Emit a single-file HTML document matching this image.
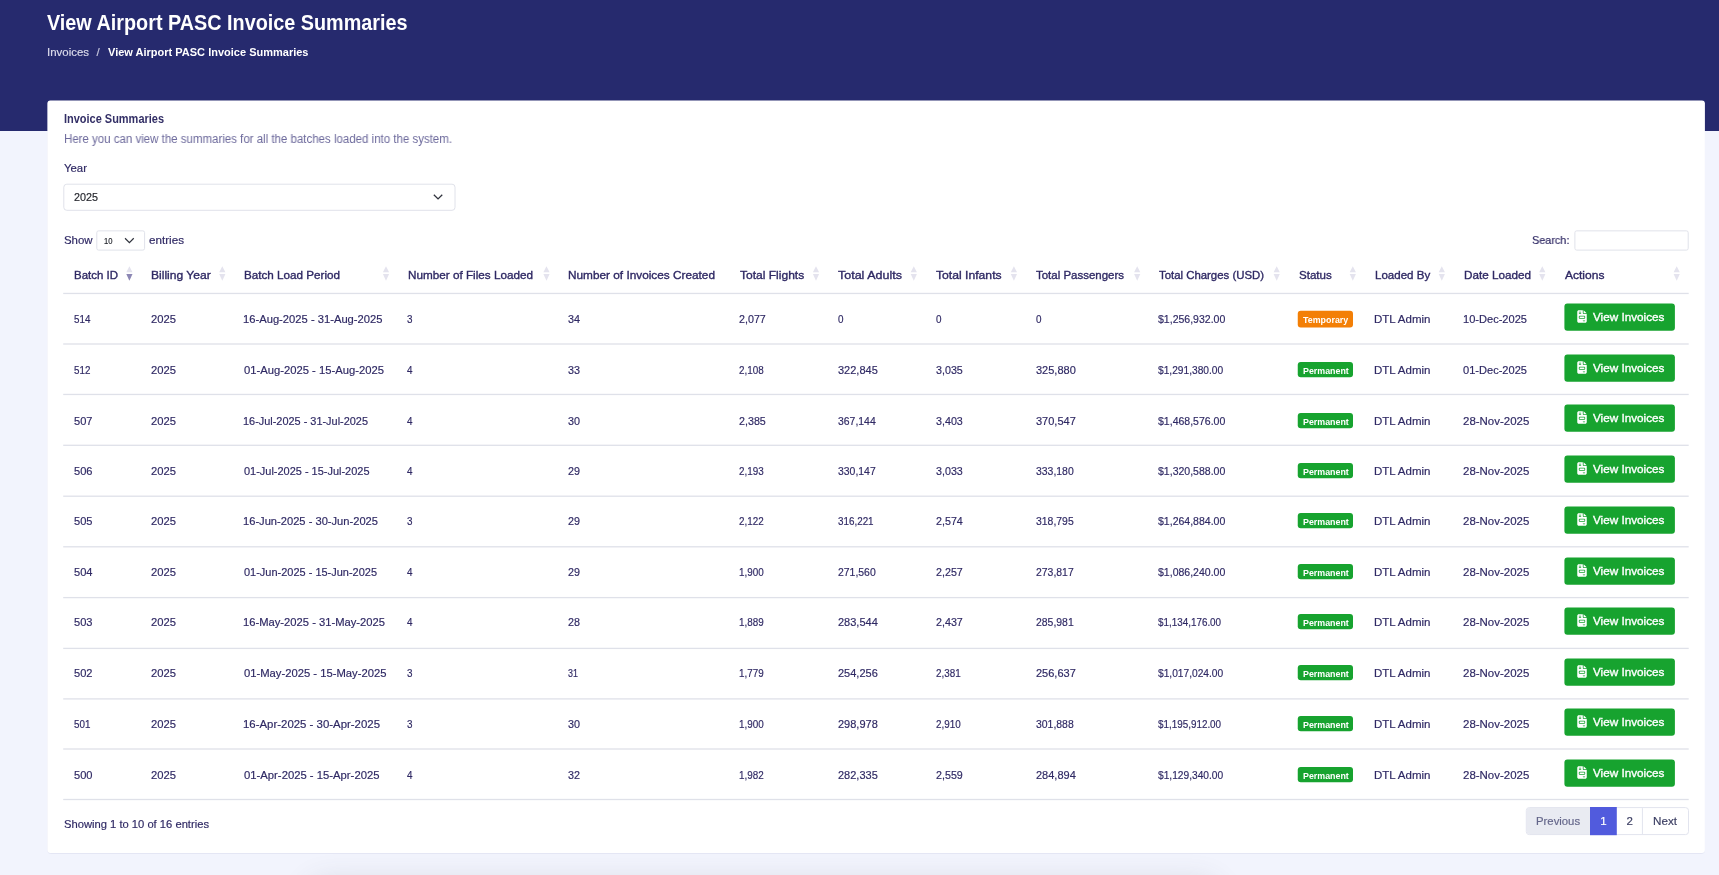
<!DOCTYPE html>
<html lang="en"><head><meta charset="utf-8"><title>View Airport PASC Invoice Summaries</title>
<style>
html,body{margin:0;padding:0}
body{width:1719px;height:875px;overflow:hidden;position:relative;background:#f2f4fd;font-family:"Liberation Sans", sans-serif;}
.t{position:absolute;white-space:nowrap;display:block;transform-origin:0 50%}
#root{position:absolute;left:0;top:0;width:1719px;height:875px;overflow:hidden;will-change:transform}
#hdr{position:absolute;left:0;top:0;width:1719px;height:130.6px;background:#262a6e}
#g{position:absolute;left:0;top:0}
</style></head>
<body>
<div id="root">
<div id="hdr"></div>

<svg id="g" width="1719" height="875" viewBox="0 0 1719 875">
<rect x="47.4" y="101.6" width="1657.5" height="752.2" rx="3.5" fill="#9ea3cc" opacity=".22"/><rect x="47.4" y="100.5" width="1657.5" height="752.4" rx="3" fill="#fff"/>
<rect x="1297.75" y="310.80" width="55.25" height="16.65" fill="#f37f06" rx="3"/>
<rect x="1564.40" y="303.50" width="110.50" height="27.30" fill="#17a32f" rx="3"/>
<path transform="translate(1577.25 310.15) scale(0.02474)" fill="#fff" d="M64 0C28.7 0 0 28.7 0 64V448c0 35.3 28.7 64 64 64H320c35.3 0 64-28.7 64-64V160H256c-17.7 0-32-14.3-32-32V0H64zM256 0V128H384L256 0zM80 64h64c8.800 0 16 7.200 16 16s-7.200 16-16 16H80c-8.800 0-16-7.200-16-16s7.200-16 16-16zm0 64h64c8.800 0 16 7.200 16 16s-7.200 16-16 16H80c-8.800 0-16-7.200-16-16s7.200-16 16-16zm16 96H288c17.700 0 32 14.300 32 32v64c0 17.700-14.300 32-32 32H96c-17.700 0-32-14.300-32-32V256c0-17.700 14.300-32 32-32zm0 32v64H288V256H96zM240 416h64c8.800 0 16 7.200 16 16s-7.200 16-16 16H240c-8.800 0-16-7.200-16-16s7.200-16 16-16z"/>
<rect x="1297.75" y="362.00" width="55.25" height="15.35" fill="#17a32f" rx="3"/>
<rect x="1564.40" y="354.50" width="110.50" height="27.30" fill="#17a32f" rx="3"/>
<path transform="translate(1577.25 361.15) scale(0.02474)" fill="#fff" d="M64 0C28.7 0 0 28.7 0 64V448c0 35.3 28.7 64 64 64H320c35.3 0 64-28.7 64-64V160H256c-17.7 0-32-14.3-32-32V0H64zM256 0V128H384L256 0zM80 64h64c8.800 0 16 7.200 16 16s-7.200 16-16 16H80c-8.800 0-16-7.200-16-16s7.200-16 16-16zm0 64h64c8.800 0 16 7.200 16 16s-7.200 16-16 16H80c-8.800 0-16-7.200-16-16s7.200-16 16-16zm16 96H288c17.700 0 32 14.300 32 32v64c0 17.700-14.300 32-32 32H96c-17.700 0-32-14.300-32-32V256c0-17.700 14.300-32 32-32zm0 32v64H288V256H96zM240 416h64c8.800 0 16 7.200 16 16s-7.200 16-16 16H240c-8.800 0-16-7.200-16-16s7.200-16 16-16z"/>
<rect x="1297.75" y="413.00" width="55.25" height="15.35" fill="#17a32f" rx="3"/>
<rect x="1564.40" y="404.50" width="110.50" height="27.30" fill="#17a32f" rx="3"/>
<path transform="translate(1577.25 411.15) scale(0.02474)" fill="#fff" d="M64 0C28.7 0 0 28.7 0 64V448c0 35.3 28.7 64 64 64H320c35.3 0 64-28.7 64-64V160H256c-17.7 0-32-14.3-32-32V0H64zM256 0V128H384L256 0zM80 64h64c8.800 0 16 7.200 16 16s-7.200 16-16 16H80c-8.800 0-16-7.200-16-16s7.200-16 16-16zm0 64h64c8.800 0 16 7.200 16 16s-7.200 16-16 16H80c-8.800 0-16-7.200-16-16s7.200-16 16-16zm16 96H288c17.700 0 32 14.300 32 32v64c0 17.700-14.300 32-32 32H96c-17.700 0-32-14.300-32-32V256c0-17.700 14.300-32 32-32zm0 32v64H288V256H96zM240 416h64c8.800 0 16 7.200 16 16s-7.200 16-16 16H240c-8.800 0-16-7.200-16-16s7.200-16 16-16z"/>
<rect x="1297.75" y="463.00" width="55.25" height="15.35" fill="#17a32f" rx="3"/>
<rect x="1564.40" y="455.50" width="110.50" height="27.30" fill="#17a32f" rx="3"/>
<path transform="translate(1577.25 462.15) scale(0.02474)" fill="#fff" d="M64 0C28.7 0 0 28.7 0 64V448c0 35.3 28.7 64 64 64H320c35.3 0 64-28.7 64-64V160H256c-17.7 0-32-14.3-32-32V0H64zM256 0V128H384L256 0zM80 64h64c8.800 0 16 7.200 16 16s-7.200 16-16 16H80c-8.800 0-16-7.200-16-16s7.200-16 16-16zm0 64h64c8.800 0 16 7.200 16 16s-7.200 16-16 16H80c-8.800 0-16-7.200-16-16s7.200-16 16-16zm16 96H288c17.700 0 32 14.300 32 32v64c0 17.700-14.300 32-32 32H96c-17.700 0-32-14.300-32-32V256c0-17.700 14.300-32 32-32zm0 32v64H288V256H96zM240 416h64c8.800 0 16 7.200 16 16s-7.200 16-16 16H240c-8.800 0-16-7.200-16-16s7.200-16 16-16z"/>
<rect x="1297.75" y="513.00" width="55.25" height="15.35" fill="#17a32f" rx="3"/>
<rect x="1564.40" y="506.50" width="110.50" height="27.30" fill="#17a32f" rx="3"/>
<path transform="translate(1577.25 513.15) scale(0.02474)" fill="#fff" d="M64 0C28.7 0 0 28.7 0 64V448c0 35.3 28.7 64 64 64H320c35.3 0 64-28.7 64-64V160H256c-17.7 0-32-14.3-32-32V0H64zM256 0V128H384L256 0zM80 64h64c8.800 0 16 7.200 16 16s-7.200 16-16 16H80c-8.800 0-16-7.200-16-16s7.200-16 16-16zm0 64h64c8.800 0 16 7.200 16 16s-7.200 16-16 16H80c-8.800 0-16-7.200-16-16s7.200-16 16-16zm16 96H288c17.700 0 32 14.300 32 32v64c0 17.700-14.300 32-32 32H96c-17.700 0-32-14.300-32-32V256c0-17.700 14.300-32 32-32zm0 32v64H288V256H96zM240 416h64c8.800 0 16 7.200 16 16s-7.200 16-16 16H240c-8.800 0-16-7.200-16-16s7.200-16 16-16z"/>
<rect x="1297.75" y="564.00" width="55.25" height="15.35" fill="#17a32f" rx="3"/>
<rect x="1564.40" y="557.50" width="110.50" height="27.30" fill="#17a32f" rx="3"/>
<path transform="translate(1577.25 564.15) scale(0.02474)" fill="#fff" d="M64 0C28.7 0 0 28.7 0 64V448c0 35.3 28.7 64 64 64H320c35.3 0 64-28.7 64-64V160H256c-17.7 0-32-14.3-32-32V0H64zM256 0V128H384L256 0zM80 64h64c8.800 0 16 7.200 16 16s-7.200 16-16 16H80c-8.800 0-16-7.200-16-16s7.200-16 16-16zm0 64h64c8.800 0 16 7.200 16 16s-7.200 16-16 16H80c-8.800 0-16-7.200-16-16s7.200-16 16-16zm16 96H288c17.700 0 32 14.300 32 32v64c0 17.700-14.300 32-32 32H96c-17.700 0-32-14.300-32-32V256c0-17.700 14.300-32 32-32zm0 32v64H288V256H96zM240 416h64c8.800 0 16 7.200 16 16s-7.200 16-16 16H240c-8.800 0-16-7.200-16-16s7.200-16 16-16z"/>
<rect x="1297.75" y="614.00" width="55.25" height="15.35" fill="#17a32f" rx="3"/>
<rect x="1564.40" y="607.50" width="110.50" height="27.30" fill="#17a32f" rx="3"/>
<path transform="translate(1577.25 614.15) scale(0.02474)" fill="#fff" d="M64 0C28.7 0 0 28.7 0 64V448c0 35.3 28.7 64 64 64H320c35.3 0 64-28.7 64-64V160H256c-17.7 0-32-14.3-32-32V0H64zM256 0V128H384L256 0zM80 64h64c8.800 0 16 7.200 16 16s-7.200 16-16 16H80c-8.800 0-16-7.200-16-16s7.200-16 16-16zm0 64h64c8.800 0 16 7.200 16 16s-7.200 16-16 16H80c-8.800 0-16-7.200-16-16s7.200-16 16-16zm16 96H288c17.700 0 32 14.300 32 32v64c0 17.700-14.300 32-32 32H96c-17.700 0-32-14.300-32-32V256c0-17.700 14.300-32 32-32zm0 32v64H288V256H96zM240 416h64c8.800 0 16 7.200 16 16s-7.200 16-16 16H240c-8.800 0-16-7.200-16-16s7.200-16 16-16z"/>
<rect x="1297.75" y="665.00" width="55.25" height="15.35" fill="#17a32f" rx="3"/>
<rect x="1564.40" y="658.50" width="110.50" height="27.30" fill="#17a32f" rx="3"/>
<path transform="translate(1577.25 665.15) scale(0.02474)" fill="#fff" d="M64 0C28.7 0 0 28.7 0 64V448c0 35.3 28.7 64 64 64H320c35.3 0 64-28.7 64-64V160H256c-17.7 0-32-14.3-32-32V0H64zM256 0V128H384L256 0zM80 64h64c8.800 0 16 7.200 16 16s-7.200 16-16 16H80c-8.800 0-16-7.200-16-16s7.200-16 16-16zm0 64h64c8.800 0 16 7.200 16 16s-7.200 16-16 16H80c-8.800 0-16-7.200-16-16s7.200-16 16-16zm16 96H288c17.700 0 32 14.300 32 32v64c0 17.700-14.300 32-32 32H96c-17.700 0-32-14.300-32-32V256c0-17.700 14.300-32 32-32zm0 32v64H288V256H96zM240 416h64c8.800 0 16 7.200 16 16s-7.200 16-16 16H240c-8.800 0-16-7.200-16-16s7.200-16 16-16z"/>
<rect x="1297.75" y="716.00" width="55.25" height="15.35" fill="#17a32f" rx="3"/>
<rect x="1564.40" y="708.50" width="110.50" height="27.30" fill="#17a32f" rx="3"/>
<path transform="translate(1577.25 715.15) scale(0.02474)" fill="#fff" d="M64 0C28.7 0 0 28.7 0 64V448c0 35.3 28.7 64 64 64H320c35.3 0 64-28.7 64-64V160H256c-17.7 0-32-14.3-32-32V0H64zM256 0V128H384L256 0zM80 64h64c8.800 0 16 7.200 16 16s-7.200 16-16 16H80c-8.800 0-16-7.200-16-16s7.200-16 16-16zm0 64h64c8.800 0 16 7.200 16 16s-7.200 16-16 16H80c-8.800 0-16-7.200-16-16s7.200-16 16-16zm16 96H288c17.700 0 32 14.300 32 32v64c0 17.700-14.300 32-32 32H96c-17.700 0-32-14.300-32-32V256c0-17.700 14.300-32 32-32zm0 32v64H288V256H96zM240 416h64c8.800 0 16 7.200 16 16s-7.200 16-16 16H240c-8.800 0-16-7.200-16-16s7.200-16 16-16z"/>
<rect x="1297.75" y="767.00" width="55.25" height="15.35" fill="#17a32f" rx="3"/>
<rect x="1564.40" y="759.50" width="110.50" height="27.30" fill="#17a32f" rx="3"/>
<path transform="translate(1577.25 766.15) scale(0.02474)" fill="#fff" d="M64 0C28.7 0 0 28.7 0 64V448c0 35.3 28.7 64 64 64H320c35.3 0 64-28.7 64-64V160H256c-17.7 0-32-14.3-32-32V0H64zM256 0V128H384L256 0zM80 64h64c8.800 0 16 7.200 16 16s-7.200 16-16 16H80c-8.800 0-16-7.200-16-16s7.200-16 16-16zm0 64h64c8.800 0 16 7.200 16 16s-7.200 16-16 16H80c-8.800 0-16-7.200-16-16s7.200-16 16-16zm16 96H288c17.700 0 32 14.300 32 32v64c0 17.700-14.300 32-32 32H96c-17.700 0-32-14.300-32-32V256c0-17.700 14.300-32 32-32zm0 32v64H288V256H96zM240 416h64c8.800 0 16 7.200 16 16s-7.200 16-16 16H240c-8.800 0-16-7.200-16-16s7.200-16 16-16z"/>
<rect x="63.20" y="292.80" width="1625.50" height="1.30" fill="#dfe1e9"/>
<rect x="63.20" y="343.35" width="1625.50" height="1.30" fill="#dfe1e9"/>
<rect x="63.20" y="393.80" width="1625.50" height="1.30" fill="#dfe1e9"/>
<rect x="63.20" y="444.65" width="1625.50" height="1.30" fill="#dfe1e9"/>
<rect x="63.20" y="495.55" width="1625.50" height="1.30" fill="#dfe1e9"/>
<rect x="63.20" y="546.15" width="1625.50" height="1.30" fill="#dfe1e9"/>
<rect x="63.20" y="596.95" width="1625.50" height="1.30" fill="#dfe1e9"/>
<rect x="63.20" y="647.75" width="1625.50" height="1.30" fill="#dfe1e9"/>
<rect x="63.20" y="698.25" width="1625.50" height="1.30" fill="#dfe1e9"/>
<rect x="63.20" y="748.35" width="1625.50" height="1.30" fill="#dfe1e9"/>
<rect x="63.20" y="798.85" width="1625.50" height="1.30" fill="#dfe1e9"/>
<rect x="63.80" y="184.20" width="391.20" height="26.10" fill="#fff" rx="3" stroke="#e0e2ea" stroke-width="1"/>
<path d="M434.3 195.2 L438.05 198.95 L441.8 195.2" fill="none" stroke="#30333d" stroke-width="1.3" stroke-linecap="square" stroke-linejoin="miter"/>
<rect x="96.80" y="230.85" width="47.80" height="19.25" fill="#fff" rx="1.8" stroke="#e0e2ea" stroke-width="1"/>
<path d="M125.5 238.7 L129.4 242.6 L133.3 238.7" fill="none" stroke="#30333d" stroke-width="1.25" stroke-linecap="square" stroke-linejoin="miter"/>
<rect x="1574.90" y="230.85" width="113.30" height="19.25" fill="#fff" rx="1.8" stroke="#e0e2ea" stroke-width="1"/>
<path d="M129.40 266.2 l3.1 6 h-6.2 Z" fill="#e4e3ee"/><path d="M129.40 280.8 l3.1 -6.7 h-6.2 Z" fill="#8c87b4"/>
<path d="M222.30 266.2 l3.1 6 h-6.2 Z" fill="#e4e3ee"/><path d="M222.30 280.8 l3.1 -6.7 h-6.2 Z" fill="#e4e3ee"/>
<path d="M386.00 266.2 l3.1 6 h-6.2 Z" fill="#e4e3ee"/><path d="M386.00 280.8 l3.1 -6.7 h-6.2 Z" fill="#e4e3ee"/>
<path d="M546.50 266.2 l3.1 6 h-6.2 Z" fill="#e4e3ee"/><path d="M546.50 280.8 l3.1 -6.7 h-6.2 Z" fill="#e4e3ee"/>
<path d="M816.00 266.2 l3.1 6 h-6.2 Z" fill="#e4e3ee"/><path d="M816.00 280.8 l3.1 -6.7 h-6.2 Z" fill="#e4e3ee"/>
<path d="M913.80 266.2 l3.1 6 h-6.2 Z" fill="#e4e3ee"/><path d="M913.80 280.8 l3.1 -6.7 h-6.2 Z" fill="#e4e3ee"/>
<path d="M1013.90 266.2 l3.1 6 h-6.2 Z" fill="#e4e3ee"/><path d="M1013.90 280.8 l3.1 -6.7 h-6.2 Z" fill="#e4e3ee"/>
<path d="M1137.20 266.2 l3.1 6 h-6.2 Z" fill="#e4e3ee"/><path d="M1137.20 280.8 l3.1 -6.7 h-6.2 Z" fill="#e4e3ee"/>
<path d="M1276.70 266.2 l3.1 6 h-6.2 Z" fill="#e4e3ee"/><path d="M1276.70 280.8 l3.1 -6.7 h-6.2 Z" fill="#e4e3ee"/>
<path d="M1352.80 266.2 l3.1 6 h-6.2 Z" fill="#e4e3ee"/><path d="M1352.80 280.8 l3.1 -6.7 h-6.2 Z" fill="#e4e3ee"/>
<path d="M1441.80 266.2 l3.1 6 h-6.2 Z" fill="#e4e3ee"/><path d="M1441.80 280.8 l3.1 -6.7 h-6.2 Z" fill="#e4e3ee"/>
<path d="M1542.30 266.2 l3.1 6 h-6.2 Z" fill="#e4e3ee"/><path d="M1542.30 280.8 l3.1 -6.7 h-6.2 Z" fill="#e4e3ee"/>
<path d="M1676.70 266.2 l3.1 6 h-6.2 Z" fill="#e4e3ee"/><path d="M1676.70 280.8 l3.1 -6.7 h-6.2 Z" fill="#e4e3ee"/>
<rect x="1526.30" y="807.60" width="162.20" height="27.00" fill="#fff" rx="3" stroke="#e2e4ee" stroke-width="1"/>
<path d="M1529.3 808.1 H1590 V834.1 H1529.3 a2.5 2.5 0 0 1 -2.5 -2.5 V810.6 a2.5 2.5 0 0 1 2.5 -2.5 Z" fill="#e9ebf2"/>
<rect x="1590.00" y="807.00" width="26.80" height="28.20" fill="#515bdd"/>
<rect x="1641.90" y="808.10" width="1.00" height="26.00" fill="#e2e4ee"/>
</svg>
<div style="position:absolute;left:318px;top:892px;width:890px;height:40px;border-radius:8px;background:#e4e5ea;box-shadow:0 0 30px 10px rgba(70,72,90,.16)"></div>

<span class="t" style="left:47.00px;top:10px;font-size:22.3px;line-height:25px;color:#fff;font-weight:700;transform:scaleX(0.8879);">View Airport PASC Invoice Summaries</span>
<span class="t" style="left:46.70px;top:46px;font-size:11.5px;line-height:12px;color:#dcdcec;transform:scaleX(0.9956);-webkit-text-stroke:0.18px #dcdcec;">Invoices</span>
<span class="t" style="left:96.50px;top:46px;font-size:11.5px;line-height:12px;color:#c9c9df;-webkit-text-stroke:0.18px #c9c9df;">/</span>
<span class="t" style="left:108.00px;top:46px;font-size:11.5px;line-height:12px;color:#fff;font-weight:700;transform:scaleX(0.9574);">View Airport PASC Invoice Summaries</span>
<span class="t" style="left:64.00px;top:112px;font-size:12px;line-height:14px;color:#332f66;font-weight:700;transform:scaleX(0.9142);">Invoice Summaries</span>
<span class="t" style="left:64.00px;top:132px;font-size:12px;line-height:14px;color:#6d6a9c;transform:scaleX(0.9567);">Here you can view the summaries for all the batches loaded into the system.</span>
<span class="t" style="left:64.00px;top:162px;font-size:11.5px;line-height:12px;color:#2f2964;transform:scaleX(0.9892);-webkit-text-stroke:0.18px #2f2964;">Year</span>
<span class="t" style="left:74.00px;top:191px;font-size:11.5px;line-height:12px;color:#24262d;transform:scaleX(0.9377);-webkit-text-stroke:0.18px #24262d;">2025</span>
<span class="t" style="left:64.00px;top:234px;font-size:11.5px;line-height:12px;color:#2f2964;transform:scaleX(0.9937);-webkit-text-stroke:0.18px #2f2964;">Show</span>
<span class="t" style="left:103.70px;top:236px;font-size:9px;line-height:10px;color:#24262d;transform:scaleX(0.8487);-webkit-text-stroke:0.18px #24262d;">10</span>
<span class="t" style="left:149.00px;top:234px;font-size:11.5px;line-height:12px;color:#2f2964;transform:scaleX(1.0136);-webkit-text-stroke:0.18px #2f2964;">entries</span>
<span class="t" style="left:1532.00px;top:234px;font-size:11.5px;line-height:12px;color:#2f2964;transform:scaleX(0.9435);-webkit-text-stroke:0.18px #2f2964;">Search:</span>
<span class="t" style="left:74.10px;top:269px;font-size:11.5px;line-height:12px;color:#2f2964;transform:scaleX(0.9975);-webkit-text-stroke:0.35px #2f2964;">Batch ID</span>
<span class="t" style="left:151.20px;top:269px;font-size:11.5px;line-height:12px;color:#2f2964;transform:scaleX(1.0491);-webkit-text-stroke:0.35px #2f2964;">Billing Year</span>
<span class="t" style="left:244.00px;top:269px;font-size:11.5px;line-height:12px;color:#2f2964;transform:scaleX(1.0145);-webkit-text-stroke:0.35px #2f2964;">Batch Load Period</span>
<span class="t" style="left:407.70px;top:269px;font-size:11.5px;line-height:12px;color:#2f2964;transform:scaleX(1.0185);-webkit-text-stroke:0.35px #2f2964;">Number of Files Loaded</span>
<span class="t" style="left:568.30px;top:269px;font-size:11.5px;line-height:12px;color:#2f2964;transform:scaleX(1.0266);-webkit-text-stroke:0.35px #2f2964;">Number of Invoices Created</span>
<span class="t" style="left:739.70px;top:269px;font-size:11.5px;line-height:12px;color:#2f2964;transform:scaleX(1.0463);-webkit-text-stroke:0.35px #2f2964;">Total Flights</span>
<span class="t" style="left:838.10px;top:269px;font-size:11.5px;line-height:12px;color:#2f2964;transform:scaleX(1.0862);-webkit-text-stroke:0.35px #2f2964;">Total Adults</span>
<span class="t" style="left:935.90px;top:269px;font-size:11.5px;line-height:12px;color:#2f2964;transform:scaleX(1.0578);-webkit-text-stroke:0.35px #2f2964;">Total Infants</span>
<span class="t" style="left:1036.00px;top:269px;font-size:11.5px;line-height:12px;color:#2f2964;transform:scaleX(0.9975);-webkit-text-stroke:0.35px #2f2964;">Total Passengers</span>
<span class="t" style="left:1158.80px;top:269px;font-size:11.5px;line-height:12px;color:#2f2964;transform:scaleX(0.9897);-webkit-text-stroke:0.35px #2f2964;">Total Charges (USD)</span>
<span class="t" style="left:1298.80px;top:269px;font-size:11.5px;line-height:12px;color:#2f2964;transform:scaleX(1.0058);-webkit-text-stroke:0.35px #2f2964;">Status</span>
<span class="t" style="left:1374.50px;top:269px;font-size:11.5px;line-height:12px;color:#2f2964;transform:scaleX(1.0036);-webkit-text-stroke:0.35px #2f2964;">Loaded By</span>
<span class="t" style="left:1463.60px;top:269px;font-size:11.5px;line-height:12px;color:#2f2964;transform:scaleX(1.0171);-webkit-text-stroke:0.35px #2f2964;">Date Loaded</span>
<span class="t" style="left:1564.80px;top:269px;font-size:11.5px;line-height:12px;color:#2f2964;transform:scaleX(1.0446);-webkit-text-stroke:0.35px #2f2964;">Actions</span>
<span class="t" style="left:73.70px;top:313px;font-size:11.5px;line-height:12px;color:#2f2964;transform:scaleX(0.8547);-webkit-text-stroke:0.18px #2f2964;">514</span>
<span class="t" style="left:150.80px;top:313px;font-size:11.5px;line-height:12px;color:#2f2964;transform:scaleX(0.9768);-webkit-text-stroke:0.18px #2f2964;">2025</span>
<span class="t" style="left:243.10px;top:313px;font-size:11.5px;line-height:12px;color:#2f2964;transform:scaleX(0.9740);-webkit-text-stroke:0.18px #2f2964;">16-Aug-2025 - 31-Aug-2025</span>
<span class="t" style="left:407.30px;top:313px;font-size:11.5px;line-height:12px;color:#2f2964;transform:scaleX(0.8585);-webkit-text-stroke:0.18px #2f2964;">3</span>
<span class="t" style="left:567.90px;top:313px;font-size:11.5px;line-height:12px;color:#2f2964;transform:scaleX(0.9377);-webkit-text-stroke:0.18px #2f2964;">34</span>
<span class="t" style="left:739.30px;top:313px;font-size:11.5px;line-height:12px;color:#2f2964;transform:scaleX(0.9312);-webkit-text-stroke:0.18px #2f2964;">2,077</span>
<span class="t" style="left:837.70px;top:313px;font-size:11.5px;line-height:12px;color:#2f2964;transform:scaleX(0.8585);-webkit-text-stroke:0.18px #2f2964;">0</span>
<span class="t" style="left:935.50px;top:313px;font-size:11.5px;line-height:12px;color:#2f2964;transform:scaleX(0.8585);-webkit-text-stroke:0.18px #2f2964;">0</span>
<span class="t" style="left:1035.60px;top:313px;font-size:11.5px;line-height:12px;color:#2f2964;transform:scaleX(0.8585);-webkit-text-stroke:0.18px #2f2964;">0</span>
<span class="t" style="left:1158.40px;top:313px;font-size:11.5px;line-height:12px;color:#2f2964;transform:scaleX(0.9151);-webkit-text-stroke:0.18px #2f2964;">$1,256,932.00</span>
<span class="t" style="left:1302.70px;top:314px;font-size:9.6px;line-height:11px;color:#fff;font-weight:700;transform:scaleX(0.9248);">Temporary</span>
<span class="t" style="left:1374.10px;top:313px;font-size:11.5px;line-height:12px;color:#2f2964;transform:scaleX(0.9988);-webkit-text-stroke:0.18px #2f2964;">DTL Admin</span>
<span class="t" style="left:1462.70px;top:313px;font-size:11.5px;line-height:12px;color:#2f2964;transform:scaleX(0.9626);-webkit-text-stroke:0.18px #2f2964;">10-Dec-2025</span>
<span class="t" style="left:1592.90px;top:310px;font-size:11.8px;line-height:14px;color:#fff;transform:scaleX(0.9927);-webkit-text-stroke:0.35px #fff;">View Invoices</span>
<span class="t" style="left:73.70px;top:364px;font-size:11.5px;line-height:12px;color:#2f2964;transform:scaleX(0.8547);-webkit-text-stroke:0.18px #2f2964;">512</span>
<span class="t" style="left:150.80px;top:364px;font-size:11.5px;line-height:12px;color:#2f2964;transform:scaleX(0.9768);-webkit-text-stroke:0.18px #2f2964;">2025</span>
<span class="t" style="left:243.60px;top:364px;font-size:11.5px;line-height:12px;color:#2f2964;transform:scaleX(0.9775);-webkit-text-stroke:0.18px #2f2964;">01-Aug-2025 - 15-Aug-2025</span>
<span class="t" style="left:407.30px;top:364px;font-size:11.5px;line-height:12px;color:#2f2964;transform:scaleX(0.8585);-webkit-text-stroke:0.18px #2f2964;">4</span>
<span class="t" style="left:567.90px;top:364px;font-size:11.5px;line-height:12px;color:#2f2964;transform:scaleX(0.9377);-webkit-text-stroke:0.18px #2f2964;">33</span>
<span class="t" style="left:739.30px;top:364px;font-size:11.5px;line-height:12px;color:#2f2964;transform:scaleX(0.8582);-webkit-text-stroke:0.18px #2f2964;">2,108</span>
<span class="t" style="left:837.70px;top:364px;font-size:11.5px;line-height:12px;color:#2f2964;transform:scaleX(0.9572);-webkit-text-stroke:0.18px #2f2964;">322,845</span>
<span class="t" style="left:935.50px;top:364px;font-size:11.5px;line-height:12px;color:#2f2964;transform:scaleX(0.9312);-webkit-text-stroke:0.18px #2f2964;">3,035</span>
<span class="t" style="left:1035.60px;top:364px;font-size:11.5px;line-height:12px;color:#2f2964;transform:scaleX(0.9572);-webkit-text-stroke:0.18px #2f2964;">325,880</span>
<span class="t" style="left:1158.40px;top:364px;font-size:11.5px;line-height:12px;color:#2f2964;transform:scaleX(0.8865);-webkit-text-stroke:0.18px #2f2964;">$1,291,380.00</span>
<span class="t" style="left:1302.90px;top:365px;font-size:9.6px;line-height:11px;color:#fff;font-weight:700;transform:scaleX(0.9235);">Permanent</span>
<span class="t" style="left:1374.10px;top:364px;font-size:11.5px;line-height:12px;color:#2f2964;transform:scaleX(0.9988);-webkit-text-stroke:0.18px #2f2964;">DTL Admin</span>
<span class="t" style="left:1463.20px;top:364px;font-size:11.5px;line-height:12px;color:#2f2964;transform:scaleX(0.9626);-webkit-text-stroke:0.18px #2f2964;">01-Dec-2025</span>
<span class="t" style="left:1592.90px;top:361px;font-size:11.8px;line-height:14px;color:#fff;transform:scaleX(0.9927);-webkit-text-stroke:0.35px #fff;">View Invoices</span>
<span class="t" style="left:73.70px;top:415px;font-size:11.5px;line-height:12px;color:#2f2964;transform:scaleX(0.9642);-webkit-text-stroke:0.18px #2f2964;">507</span>
<span class="t" style="left:150.80px;top:415px;font-size:11.5px;line-height:12px;color:#2f2964;transform:scaleX(0.9768);-webkit-text-stroke:0.18px #2f2964;">2025</span>
<span class="t" style="left:243.10px;top:415px;font-size:11.5px;line-height:12px;color:#2f2964;transform:scaleX(0.9491);-webkit-text-stroke:0.18px #2f2964;">16-Jul-2025 - 31-Jul-2025</span>
<span class="t" style="left:407.30px;top:415px;font-size:11.5px;line-height:12px;color:#2f2964;transform:scaleX(0.8585);-webkit-text-stroke:0.18px #2f2964;">4</span>
<span class="t" style="left:567.90px;top:415px;font-size:11.5px;line-height:12px;color:#2f2964;transform:scaleX(0.9377);-webkit-text-stroke:0.18px #2f2964;">30</span>
<span class="t" style="left:739.30px;top:415px;font-size:11.5px;line-height:12px;color:#2f2964;transform:scaleX(0.9312);-webkit-text-stroke:0.18px #2f2964;">2,385</span>
<span class="t" style="left:837.70px;top:415px;font-size:11.5px;line-height:12px;color:#2f2964;transform:scaleX(0.9067);-webkit-text-stroke:0.18px #2f2964;">367,144</span>
<span class="t" style="left:935.50px;top:415px;font-size:11.5px;line-height:12px;color:#2f2964;transform:scaleX(0.9312);-webkit-text-stroke:0.18px #2f2964;">3,403</span>
<span class="t" style="left:1035.60px;top:415px;font-size:11.5px;line-height:12px;color:#2f2964;transform:scaleX(0.9572);-webkit-text-stroke:0.18px #2f2964;">370,547</span>
<span class="t" style="left:1158.40px;top:415px;font-size:11.5px;line-height:12px;color:#2f2964;transform:scaleX(0.9151);-webkit-text-stroke:0.18px #2f2964;">$1,468,576.00</span>
<span class="t" style="left:1302.90px;top:416px;font-size:9.6px;line-height:11px;color:#fff;font-weight:700;transform:scaleX(0.9235);">Permanent</span>
<span class="t" style="left:1374.10px;top:415px;font-size:11.5px;line-height:12px;color:#2f2964;transform:scaleX(0.9988);-webkit-text-stroke:0.18px #2f2964;">DTL Admin</span>
<span class="t" style="left:1463.20px;top:415px;font-size:11.5px;line-height:12px;color:#2f2964;transform:scaleX(0.9972);-webkit-text-stroke:0.18px #2f2964;">28-Nov-2025</span>
<span class="t" style="left:1592.90px;top:411px;font-size:11.8px;line-height:14px;color:#fff;transform:scaleX(0.9927);-webkit-text-stroke:0.35px #fff;">View Invoices</span>
<span class="t" style="left:73.70px;top:465px;font-size:11.5px;line-height:12px;color:#2f2964;transform:scaleX(0.9642);-webkit-text-stroke:0.18px #2f2964;">506</span>
<span class="t" style="left:150.80px;top:465px;font-size:11.5px;line-height:12px;color:#2f2964;transform:scaleX(0.9768);-webkit-text-stroke:0.18px #2f2964;">2025</span>
<span class="t" style="left:243.60px;top:465px;font-size:11.5px;line-height:12px;color:#2f2964;transform:scaleX(0.9529);-webkit-text-stroke:0.18px #2f2964;">01-Jul-2025 - 15-Jul-2025</span>
<span class="t" style="left:407.30px;top:465px;font-size:11.5px;line-height:12px;color:#2f2964;transform:scaleX(0.8585);-webkit-text-stroke:0.18px #2f2964;">4</span>
<span class="t" style="left:567.90px;top:465px;font-size:11.5px;line-height:12px;color:#2f2964;transform:scaleX(0.9377);-webkit-text-stroke:0.18px #2f2964;">29</span>
<span class="t" style="left:739.30px;top:465px;font-size:11.5px;line-height:12px;color:#2f2964;transform:scaleX(0.8582);-webkit-text-stroke:0.18px #2f2964;">2,193</span>
<span class="t" style="left:837.70px;top:465px;font-size:11.5px;line-height:12px;color:#2f2964;transform:scaleX(0.9067);-webkit-text-stroke:0.18px #2f2964;">330,147</span>
<span class="t" style="left:935.50px;top:465px;font-size:11.5px;line-height:12px;color:#2f2964;transform:scaleX(0.9312);-webkit-text-stroke:0.18px #2f2964;">3,033</span>
<span class="t" style="left:1035.60px;top:465px;font-size:11.5px;line-height:12px;color:#2f2964;transform:scaleX(0.9067);-webkit-text-stroke:0.18px #2f2964;">333,180</span>
<span class="t" style="left:1158.40px;top:465px;font-size:11.5px;line-height:12px;color:#2f2964;transform:scaleX(0.9151);-webkit-text-stroke:0.18px #2f2964;">$1,320,588.00</span>
<span class="t" style="left:1302.90px;top:466px;font-size:9.6px;line-height:11px;color:#fff;font-weight:700;transform:scaleX(0.9235);">Permanent</span>
<span class="t" style="left:1374.10px;top:465px;font-size:11.5px;line-height:12px;color:#2f2964;transform:scaleX(0.9988);-webkit-text-stroke:0.18px #2f2964;">DTL Admin</span>
<span class="t" style="left:1463.20px;top:465px;font-size:11.5px;line-height:12px;color:#2f2964;transform:scaleX(0.9972);-webkit-text-stroke:0.18px #2f2964;">28-Nov-2025</span>
<span class="t" style="left:1592.90px;top:462px;font-size:11.8px;line-height:14px;color:#fff;transform:scaleX(0.9927);-webkit-text-stroke:0.35px #fff;">View Invoices</span>
<span class="t" style="left:73.70px;top:515px;font-size:11.5px;line-height:12px;color:#2f2964;transform:scaleX(0.9642);-webkit-text-stroke:0.18px #2f2964;">505</span>
<span class="t" style="left:150.80px;top:515px;font-size:11.5px;line-height:12px;color:#2f2964;transform:scaleX(0.9768);-webkit-text-stroke:0.18px #2f2964;">2025</span>
<span class="t" style="left:243.10px;top:515px;font-size:11.5px;line-height:12px;color:#2f2964;transform:scaleX(0.9686);-webkit-text-stroke:0.18px #2f2964;">16-Jun-2025 - 30-Jun-2025</span>
<span class="t" style="left:407.30px;top:515px;font-size:11.5px;line-height:12px;color:#2f2964;transform:scaleX(0.8585);-webkit-text-stroke:0.18px #2f2964;">3</span>
<span class="t" style="left:567.90px;top:515px;font-size:11.5px;line-height:12px;color:#2f2964;transform:scaleX(0.9377);-webkit-text-stroke:0.18px #2f2964;">29</span>
<span class="t" style="left:739.30px;top:515px;font-size:11.5px;line-height:12px;color:#2f2964;transform:scaleX(0.8582);-webkit-text-stroke:0.18px #2f2964;">2,122</span>
<span class="t" style="left:837.70px;top:515px;font-size:11.5px;line-height:12px;color:#2f2964;transform:scaleX(0.8562);-webkit-text-stroke:0.18px #2f2964;">316,221</span>
<span class="t" style="left:935.50px;top:515px;font-size:11.5px;line-height:12px;color:#2f2964;transform:scaleX(0.9312);-webkit-text-stroke:0.18px #2f2964;">2,574</span>
<span class="t" style="left:1035.60px;top:515px;font-size:11.5px;line-height:12px;color:#2f2964;transform:scaleX(0.9067);-webkit-text-stroke:0.18px #2f2964;">318,795</span>
<span class="t" style="left:1158.40px;top:515px;font-size:11.5px;line-height:12px;color:#2f2964;transform:scaleX(0.9151);-webkit-text-stroke:0.18px #2f2964;">$1,264,884.00</span>
<span class="t" style="left:1302.90px;top:516px;font-size:9.6px;line-height:11px;color:#fff;font-weight:700;transform:scaleX(0.9235);">Permanent</span>
<span class="t" style="left:1374.10px;top:515px;font-size:11.5px;line-height:12px;color:#2f2964;transform:scaleX(0.9988);-webkit-text-stroke:0.18px #2f2964;">DTL Admin</span>
<span class="t" style="left:1463.20px;top:515px;font-size:11.5px;line-height:12px;color:#2f2964;transform:scaleX(0.9972);-webkit-text-stroke:0.18px #2f2964;">28-Nov-2025</span>
<span class="t" style="left:1592.90px;top:513px;font-size:11.8px;line-height:14px;color:#fff;transform:scaleX(0.9927);-webkit-text-stroke:0.35px #fff;">View Invoices</span>
<span class="t" style="left:73.70px;top:566px;font-size:11.5px;line-height:12px;color:#2f2964;transform:scaleX(0.9642);-webkit-text-stroke:0.18px #2f2964;">504</span>
<span class="t" style="left:150.80px;top:566px;font-size:11.5px;line-height:12px;color:#2f2964;transform:scaleX(0.9768);-webkit-text-stroke:0.18px #2f2964;">2025</span>
<span class="t" style="left:243.60px;top:566px;font-size:11.5px;line-height:12px;color:#2f2964;transform:scaleX(0.9543);-webkit-text-stroke:0.18px #2f2964;">01-Jun-2025 - 15-Jun-2025</span>
<span class="t" style="left:407.30px;top:566px;font-size:11.5px;line-height:12px;color:#2f2964;transform:scaleX(0.8585);-webkit-text-stroke:0.18px #2f2964;">4</span>
<span class="t" style="left:567.90px;top:566px;font-size:11.5px;line-height:12px;color:#2f2964;transform:scaleX(0.9377);-webkit-text-stroke:0.18px #2f2964;">29</span>
<span class="t" style="left:738.80px;top:566px;font-size:11.5px;line-height:12px;color:#2f2964;transform:scaleX(0.8582);-webkit-text-stroke:0.18px #2f2964;">1,900</span>
<span class="t" style="left:837.70px;top:566px;font-size:11.5px;line-height:12px;color:#2f2964;transform:scaleX(0.9067);-webkit-text-stroke:0.18px #2f2964;">271,560</span>
<span class="t" style="left:935.50px;top:566px;font-size:11.5px;line-height:12px;color:#2f2964;transform:scaleX(0.9312);-webkit-text-stroke:0.18px #2f2964;">2,257</span>
<span class="t" style="left:1035.60px;top:566px;font-size:11.5px;line-height:12px;color:#2f2964;transform:scaleX(0.9067);-webkit-text-stroke:0.18px #2f2964;">273,817</span>
<span class="t" style="left:1158.40px;top:566px;font-size:11.5px;line-height:12px;color:#2f2964;transform:scaleX(0.9151);-webkit-text-stroke:0.18px #2f2964;">$1,086,240.00</span>
<span class="t" style="left:1302.90px;top:567px;font-size:9.6px;line-height:11px;color:#fff;font-weight:700;transform:scaleX(0.9235);">Permanent</span>
<span class="t" style="left:1374.10px;top:566px;font-size:11.5px;line-height:12px;color:#2f2964;transform:scaleX(0.9988);-webkit-text-stroke:0.18px #2f2964;">DTL Admin</span>
<span class="t" style="left:1463.20px;top:566px;font-size:11.5px;line-height:12px;color:#2f2964;transform:scaleX(0.9972);-webkit-text-stroke:0.18px #2f2964;">28-Nov-2025</span>
<span class="t" style="left:1592.90px;top:564px;font-size:11.8px;line-height:14px;color:#fff;transform:scaleX(0.9927);-webkit-text-stroke:0.35px #fff;">View Invoices</span>
<span class="t" style="left:73.70px;top:616px;font-size:11.5px;line-height:12px;color:#2f2964;transform:scaleX(0.9642);-webkit-text-stroke:0.18px #2f2964;">503</span>
<span class="t" style="left:150.80px;top:616px;font-size:11.5px;line-height:12px;color:#2f2964;transform:scaleX(0.9768);-webkit-text-stroke:0.18px #2f2964;">2025</span>
<span class="t" style="left:243.10px;top:616px;font-size:11.5px;line-height:12px;color:#2f2964;transform:scaleX(0.9743);-webkit-text-stroke:0.18px #2f2964;">16-May-2025 - 31-May-2025</span>
<span class="t" style="left:407.30px;top:616px;font-size:11.5px;line-height:12px;color:#2f2964;transform:scaleX(0.8585);-webkit-text-stroke:0.18px #2f2964;">4</span>
<span class="t" style="left:567.90px;top:616px;font-size:11.5px;line-height:12px;color:#2f2964;transform:scaleX(0.9377);-webkit-text-stroke:0.18px #2f2964;">28</span>
<span class="t" style="left:738.80px;top:616px;font-size:11.5px;line-height:12px;color:#2f2964;transform:scaleX(0.8582);-webkit-text-stroke:0.18px #2f2964;">1,889</span>
<span class="t" style="left:837.70px;top:616px;font-size:11.5px;line-height:12px;color:#2f2964;transform:scaleX(0.9572);-webkit-text-stroke:0.18px #2f2964;">283,544</span>
<span class="t" style="left:935.50px;top:616px;font-size:11.5px;line-height:12px;color:#2f2964;transform:scaleX(0.9312);-webkit-text-stroke:0.18px #2f2964;">2,437</span>
<span class="t" style="left:1035.60px;top:616px;font-size:11.5px;line-height:12px;color:#2f2964;transform:scaleX(0.9067);-webkit-text-stroke:0.18px #2f2964;">285,981</span>
<span class="t" style="left:1158.40px;top:616px;font-size:11.5px;line-height:12px;color:#2f2964;transform:scaleX(0.8580);-webkit-text-stroke:0.18px #2f2964;">$1,134,176.00</span>
<span class="t" style="left:1302.90px;top:617px;font-size:9.6px;line-height:11px;color:#fff;font-weight:700;transform:scaleX(0.9235);">Permanent</span>
<span class="t" style="left:1374.10px;top:616px;font-size:11.5px;line-height:12px;color:#2f2964;transform:scaleX(0.9988);-webkit-text-stroke:0.18px #2f2964;">DTL Admin</span>
<span class="t" style="left:1463.20px;top:616px;font-size:11.5px;line-height:12px;color:#2f2964;transform:scaleX(0.9972);-webkit-text-stroke:0.18px #2f2964;">28-Nov-2025</span>
<span class="t" style="left:1592.90px;top:614px;font-size:11.8px;line-height:14px;color:#fff;transform:scaleX(0.9927);-webkit-text-stroke:0.35px #fff;">View Invoices</span>
<span class="t" style="left:73.70px;top:667px;font-size:11.5px;line-height:12px;color:#2f2964;transform:scaleX(0.9642);-webkit-text-stroke:0.18px #2f2964;">502</span>
<span class="t" style="left:150.80px;top:667px;font-size:11.5px;line-height:12px;color:#2f2964;transform:scaleX(0.9768);-webkit-text-stroke:0.18px #2f2964;">2025</span>
<span class="t" style="left:243.60px;top:667px;font-size:11.5px;line-height:12px;color:#2f2964;transform:scaleX(0.9777);-webkit-text-stroke:0.18px #2f2964;">01-May-2025 - 15-May-2025</span>
<span class="t" style="left:407.30px;top:667px;font-size:11.5px;line-height:12px;color:#2f2964;transform:scaleX(0.8585);-webkit-text-stroke:0.18px #2f2964;">3</span>
<span class="t" style="left:567.90px;top:667px;font-size:11.5px;line-height:12px;color:#2f2964;transform:scaleX(0.7736);-webkit-text-stroke:0.18px #2f2964;">31</span>
<span class="t" style="left:738.80px;top:667px;font-size:11.5px;line-height:12px;color:#2f2964;transform:scaleX(0.8582);-webkit-text-stroke:0.18px #2f2964;">1,779</span>
<span class="t" style="left:837.70px;top:667px;font-size:11.5px;line-height:12px;color:#2f2964;transform:scaleX(0.9572);-webkit-text-stroke:0.18px #2f2964;">254,256</span>
<span class="t" style="left:935.50px;top:667px;font-size:11.5px;line-height:12px;color:#2f2964;transform:scaleX(0.8582);-webkit-text-stroke:0.18px #2f2964;">2,381</span>
<span class="t" style="left:1035.60px;top:667px;font-size:11.5px;line-height:12px;color:#2f2964;transform:scaleX(0.9572);-webkit-text-stroke:0.18px #2f2964;">256,637</span>
<span class="t" style="left:1158.40px;top:667px;font-size:11.5px;line-height:12px;color:#2f2964;transform:scaleX(0.8865);-webkit-text-stroke:0.18px #2f2964;">$1,017,024.00</span>
<span class="t" style="left:1302.90px;top:668px;font-size:9.6px;line-height:11px;color:#fff;font-weight:700;transform:scaleX(0.9235);">Permanent</span>
<span class="t" style="left:1374.10px;top:667px;font-size:11.5px;line-height:12px;color:#2f2964;transform:scaleX(0.9988);-webkit-text-stroke:0.18px #2f2964;">DTL Admin</span>
<span class="t" style="left:1463.20px;top:667px;font-size:11.5px;line-height:12px;color:#2f2964;transform:scaleX(0.9972);-webkit-text-stroke:0.18px #2f2964;">28-Nov-2025</span>
<span class="t" style="left:1592.90px;top:665px;font-size:11.8px;line-height:14px;color:#fff;transform:scaleX(0.9927);-webkit-text-stroke:0.35px #fff;">View Invoices</span>
<span class="t" style="left:73.70px;top:718px;font-size:11.5px;line-height:12px;color:#2f2964;transform:scaleX(0.8547);-webkit-text-stroke:0.18px #2f2964;">501</span>
<span class="t" style="left:150.80px;top:718px;font-size:11.5px;line-height:12px;color:#2f2964;transform:scaleX(0.9768);-webkit-text-stroke:0.18px #2f2964;">2025</span>
<span class="t" style="left:243.10px;top:718px;font-size:11.5px;line-height:12px;color:#2f2964;transform:scaleX(0.9921);-webkit-text-stroke:0.18px #2f2964;">16-Apr-2025 - 30-Apr-2025</span>
<span class="t" style="left:407.30px;top:718px;font-size:11.5px;line-height:12px;color:#2f2964;transform:scaleX(0.8585);-webkit-text-stroke:0.18px #2f2964;">3</span>
<span class="t" style="left:567.90px;top:718px;font-size:11.5px;line-height:12px;color:#2f2964;transform:scaleX(0.9377);-webkit-text-stroke:0.18px #2f2964;">30</span>
<span class="t" style="left:738.80px;top:718px;font-size:11.5px;line-height:12px;color:#2f2964;transform:scaleX(0.8582);-webkit-text-stroke:0.18px #2f2964;">1,900</span>
<span class="t" style="left:837.70px;top:718px;font-size:11.5px;line-height:12px;color:#2f2964;transform:scaleX(0.9572);-webkit-text-stroke:0.18px #2f2964;">298,978</span>
<span class="t" style="left:935.50px;top:718px;font-size:11.5px;line-height:12px;color:#2f2964;transform:scaleX(0.8582);-webkit-text-stroke:0.18px #2f2964;">2,910</span>
<span class="t" style="left:1035.60px;top:718px;font-size:11.5px;line-height:12px;color:#2f2964;transform:scaleX(0.9067);-webkit-text-stroke:0.18px #2f2964;">301,888</span>
<span class="t" style="left:1158.40px;top:718px;font-size:11.5px;line-height:12px;color:#2f2964;transform:scaleX(0.8580);-webkit-text-stroke:0.18px #2f2964;">$1,195,912.00</span>
<span class="t" style="left:1302.90px;top:719px;font-size:9.6px;line-height:11px;color:#fff;font-weight:700;transform:scaleX(0.9235);">Permanent</span>
<span class="t" style="left:1374.10px;top:718px;font-size:11.5px;line-height:12px;color:#2f2964;transform:scaleX(0.9988);-webkit-text-stroke:0.18px #2f2964;">DTL Admin</span>
<span class="t" style="left:1463.20px;top:718px;font-size:11.5px;line-height:12px;color:#2f2964;transform:scaleX(0.9972);-webkit-text-stroke:0.18px #2f2964;">28-Nov-2025</span>
<span class="t" style="left:1592.90px;top:715px;font-size:11.8px;line-height:14px;color:#fff;transform:scaleX(0.9927);-webkit-text-stroke:0.35px #fff;">View Invoices</span>
<span class="t" style="left:73.70px;top:769px;font-size:11.5px;line-height:12px;color:#2f2964;transform:scaleX(0.9642);-webkit-text-stroke:0.18px #2f2964;">500</span>
<span class="t" style="left:150.80px;top:769px;font-size:11.5px;line-height:12px;color:#2f2964;transform:scaleX(0.9768);-webkit-text-stroke:0.18px #2f2964;">2025</span>
<span class="t" style="left:243.60px;top:769px;font-size:11.5px;line-height:12px;color:#2f2964;transform:scaleX(0.9812);-webkit-text-stroke:0.18px #2f2964;">01-Apr-2025 - 15-Apr-2025</span>
<span class="t" style="left:407.30px;top:769px;font-size:11.5px;line-height:12px;color:#2f2964;transform:scaleX(0.8585);-webkit-text-stroke:0.18px #2f2964;">4</span>
<span class="t" style="left:567.90px;top:769px;font-size:11.5px;line-height:12px;color:#2f2964;transform:scaleX(0.9377);-webkit-text-stroke:0.18px #2f2964;">32</span>
<span class="t" style="left:738.80px;top:769px;font-size:11.5px;line-height:12px;color:#2f2964;transform:scaleX(0.8582);-webkit-text-stroke:0.18px #2f2964;">1,982</span>
<span class="t" style="left:837.70px;top:769px;font-size:11.5px;line-height:12px;color:#2f2964;transform:scaleX(0.9572);-webkit-text-stroke:0.18px #2f2964;">282,335</span>
<span class="t" style="left:935.50px;top:769px;font-size:11.5px;line-height:12px;color:#2f2964;transform:scaleX(0.9312);-webkit-text-stroke:0.18px #2f2964;">2,559</span>
<span class="t" style="left:1035.60px;top:769px;font-size:11.5px;line-height:12px;color:#2f2964;transform:scaleX(0.9572);-webkit-text-stroke:0.18px #2f2964;">284,894</span>
<span class="t" style="left:1158.40px;top:769px;font-size:11.5px;line-height:12px;color:#2f2964;transform:scaleX(0.8865);-webkit-text-stroke:0.18px #2f2964;">$1,129,340.00</span>
<span class="t" style="left:1302.90px;top:770px;font-size:9.6px;line-height:11px;color:#fff;font-weight:700;transform:scaleX(0.9235);">Permanent</span>
<span class="t" style="left:1374.10px;top:769px;font-size:11.5px;line-height:12px;color:#2f2964;transform:scaleX(0.9988);-webkit-text-stroke:0.18px #2f2964;">DTL Admin</span>
<span class="t" style="left:1463.20px;top:769px;font-size:11.5px;line-height:12px;color:#2f2964;transform:scaleX(0.9972);-webkit-text-stroke:0.18px #2f2964;">28-Nov-2025</span>
<span class="t" style="left:1592.90px;top:766px;font-size:11.8px;line-height:14px;color:#fff;transform:scaleX(0.9927);-webkit-text-stroke:0.35px #fff;">View Invoices</span>
<span class="t" style="left:64.20px;top:818px;font-size:11.5px;line-height:12px;color:#2f2964;transform:scaleX(0.9734);-webkit-text-stroke:0.18px #2f2964;">Showing 1 to 10 of 16 entries</span>
<span class="t" style="left:1536.30px;top:815px;font-size:11.5px;line-height:12px;color:#64668a;transform:scaleX(0.9855);-webkit-text-stroke:0.18px #64668a;">Previous</span>
<span class="t" style="left:1603.40px;top:815px;font-size:11.5px;line-height:12px;color:#fff;-webkit-text-stroke:0.18px #fff;transform:translateX(-50%);">1</span>
<span class="t" style="left:1629.60px;top:815px;font-size:11.5px;line-height:12px;color:#3c3f63;-webkit-text-stroke:0.18px #3c3f63;transform:translateX(-50%);">2</span>
<span class="t" style="left:1653.40px;top:815px;font-size:11.5px;line-height:12px;color:#3c3f63;transform:scaleX(1.0145);-webkit-text-stroke:0.18px #3c3f63;">Next</span>
</div>
</body></html>
